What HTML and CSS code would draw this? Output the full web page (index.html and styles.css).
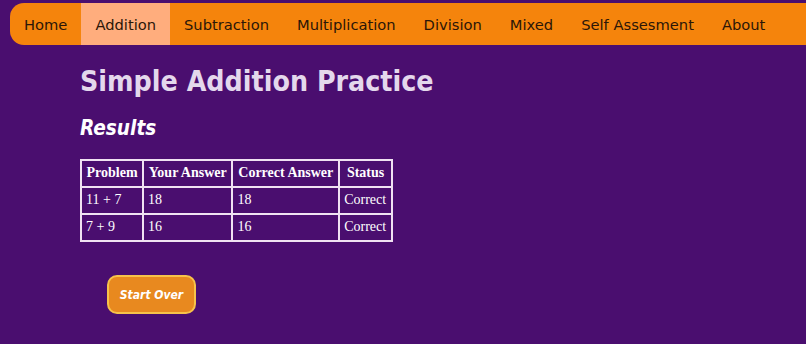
FILE: index.html
```html
<!DOCTYPE html>
<html lang="en">
<head>
  <meta charset="UTF-8">
  <title>Simple Addition Practice</title>
  <link rel="stylesheet" href="styles.css">
</head>
<body>
  <ul class="nav">
    <li><a href="#">Home</a></li>
    <li><a href="#" class="active">Addition</a></li>
    <li><a href="#">Subtraction</a></li>
    <li><a href="#">Multiplication</a></li>
    <li><a href="#">Division</a></li>
    <li><a href="#">Mixed</a></li>
    <li><a href="#">Self Assesment</a></li>
    <li><a href="#">About</a></li>
  </ul>

  <div class="content">
    <h1 class="title">Simple Addition Practice</h1>
    <h2 class="subtitle">Results</h2>

    <table class="results">
      <tr>
        <th>Problem</th>
        <th>Your Answer</th>
        <th>Correct Answer</th>
        <th>Status</th>
      </tr>
      <tr>
        <td>11 + 7</td>
        <td>18</td>
        <td>18</td>
        <td>Correct</td>
      </tr>
      <tr>
        <td>7 + 9</td>
        <td>16</td>
        <td>16</td>
        <td>Correct</td>
      </tr>
    </table>

    <button class="btn-restart">Start Over</button>
  </div>
</body>
</html>
```

FILE: styles.css
```css
:root {
  --bg: #4a0e6f;
  --orange: #f5840c;
  --orange-light: #ffad7d;
  --nav-text: #2b1608;
  --title: #e4d8ec;
  --line: #f0e2f2;
  --btn: #e8891f;
  --btn-border: #f7c24a;
}

* {
  box-sizing: border-box;
}

body {
  margin: 0;
  background: var(--bg);
  font-family: "DejaVu Sans", sans-serif;
  overflow: hidden;
}

.nav {
  display: flex;
  list-style: none;
  margin: 3px 0 0 10px;
  padding: 0;
  height: 42px;
  width: 820px;
  background: var(--orange);
  border-radius: 14px 0 0 14px;
  overflow: hidden;
}
.nav a {
  display: block;
  height: 42px;
  line-height: 43px;
  padding: 0 14px;
  font-size: 14.7px;
  color: var(--nav-text);
  text-decoration: none;
}
.nav a.active {
  background: var(--orange-light);
}

.content {
  padding: 0 0 0 80px;
}

.title {
  margin: 20px 0 0;
  font-family: "DejaVu Sans Condensed", "DejaVu Sans", sans-serif;
  font-stretch: condensed;
  font-size: 28.3px;
  font-weight: bold;
  color: var(--title);
}

.subtitle {
  margin: 18px 0 0;
  font-family: "DejaVu Sans Condensed", "DejaVu Sans", sans-serif;
  font-stretch: condensed;
  font-size: 20.6px;
  font-style: italic;
  font-weight: bold;
  color: #ffffff;
}

.results {
  width: 313px;
  margin-top: 19px;
  border-collapse: collapse;
  border: 2px solid var(--line);
  font-family: "Liberation Serif", serif;
  font-size: 14px;
  color: #ffffff;
}
.results th,
.results td {
  border: 2px solid var(--line);
  padding: 4px 4px 5px;
  text-align: left;
}
.results th {
  text-align: center;
}

.btn-restart {
  display: block;
  margin: 33px 0 0 27px;
  width: 89px;
  height: 39px;
  background: var(--btn);
  border: 2px solid var(--btn-border);
  border-radius: 10px;
  font-family: "DejaVu Sans Condensed", "DejaVu Sans", sans-serif;
  font-stretch: condensed;
  font-size: 12px;
  font-style: italic;
  font-weight: bold;
  color: #ffffff;
  cursor: pointer;
}
```
